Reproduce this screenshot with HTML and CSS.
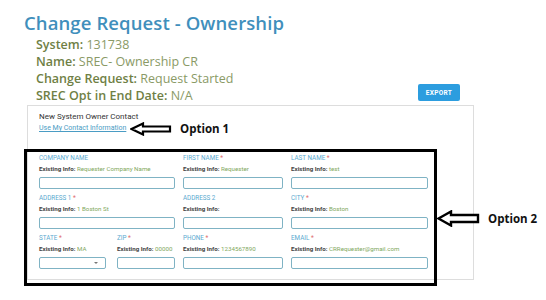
FILE: index.html
```html
<!DOCTYPE html>
<html lang="en">
<head>
    <meta charset="UTF-8">
    <meta name="viewport" content="width=device-width, initial-scale=1.0">
    <title>Change Request - Ownership</title>
    <link rel="stylesheet" href="styles.css">
</head>
<body>
    <div class="page">
        <h1>Change Request - Ownership</h1>
        <div class="summary">
            <div class="meta">
                <p><b>System:</b> 131738</p>
                <p><b>Name:</b> SREC- Ownership CR</p>
                <p><b>Change Request:</b> Request Started</p>
                <p><b>SREC Opt in End Date:</b> N/A</p>
            </div>
            <button class="export">EXPORT</button>
        </div>

        <div class="card">
            <div class="owner-head">
                <p>New System Owner Contact</p>
                <a href="#">Use My Contact Information</a>
            </div>

            <div class="form-grid">
                <div class="field">
                    <label>COMPANY NAME</label>
                    <p class="existing"><b>Existing Info:</b> Requester Company Name</p>
                    <input type="text">
                </div>
                <div class="field">
                    <label>FIRST NAME <span class="req">*</span></label>
                    <p class="existing"><b>Existing Info:</b> Requester</p>
                    <input type="text">
                </div>
                <div class="field">
                    <label>LAST NAME <span class="req">*</span></label>
                    <p class="existing"><b>Existing Info:</b> test</p>
                    <input type="text">
                </div>

                <div class="field">
                    <label>ADDRESS 1 <span class="req">*</span></label>
                    <p class="existing"><b>Existing Info:</b> 1 Boston St</p>
                    <input type="text">
                </div>
                <div class="field">
                    <label>ADDRESS 2</label>
                    <p class="existing"><b>Existing Info:</b></p>
                    <input type="text">
                </div>
                <div class="field">
                    <label>CITY <span class="req">*</span></label>
                    <p class="existing"><b>Existing Info:</b> Boston</p>
                    <input type="text">
                </div>

                <div class="split">
                    <div class="field">
                        <label>STATE <span class="req">*</span></label>
                        <p class="existing"><b>Existing Info:</b> MA</p>
                        <div class="select"><span class="caret"></span></div>
                    </div>
                    <div class="field">
                        <label>ZIP <span class="req">*</span></label>
                        <p class="existing"><b>Existing Info:</b> 00000</p>
                        <input type="text">
                    </div>
                </div>
                <div class="field">
                    <label>PHONE <span class="req">*</span></label>
                    <p class="existing"><b>Existing Info:</b> 1234567890</p>
                    <input type="text">
                </div>
                <div class="field">
                    <label>EMAIL <span class="req">*</span></label>
                    <p class="existing"><b>Existing Info:</b> CRRequester@gmail.com</p>
                    <input type="text">
                </div>
            </div>
        </div>
    </div>

    <!-- annotations drawn over the screenshot -->
    <div class="note-box"></div>
    <div class="note note-1">
        <svg width="42" height="14" viewBox="0 0 42 14"><polygon points="1.5,7 13,1.5 13,4.5 40,4.5 40,9.5 13,9.5 13,12.5" fill="#fff" stroke="#000" stroke-width="2.2" stroke-linejoin="miter"/></svg>
        <span>Option 1</span>
    </div>
    <div class="note note-2">
        <svg width="43" height="17" viewBox="0 0 43 17"><polygon points="1.5,8.5 14,1.5 14,5 41,5 41,12 14,12 14,15.5" fill="#fff" stroke="#000" stroke-width="2.4" stroke-linejoin="miter"/></svg>
        <span>Option 2</span>
    </div>
</body>
</html>
```

FILE: styles.css
```css
body {
    margin: 0;
    font-family: "Open Sans", Arial, sans-serif;
    background-color: #fff;
    position: relative;
    width: 546px;
    height: 300px;
    overflow: hidden;
}
.page {
    padding: 11px 0 0 24px;
}
h1 {
    margin: 0;
    font-size: 18.5px;
    font-weight: 600;
    color: #3f8fbc;
    line-height: 23px;
    letter-spacing: 0.1px;
}
.summary {
    display: flex;
    align-items: flex-end;
    width: 450px;
}
.meta {
    flex: 1;
    padding: 2px 0 0 12px;
}
.meta p {
    margin: 0;
    font-size: 12.5px;
    line-height: 17px;
    color: #8a9a66;
}
.meta b {
    color: #6f7f45;
    font-weight: 600;
}
.export {
    background-color: #2c9ddf;
    color: #fff;
    border: none;
    border-radius: 2px;
    font-family: Roboto, Arial, sans-serif;
    font-size: 6.5px;
    font-weight: 700;
    letter-spacing: 0.3px;
    width: 42px;
    height: 17px;
    padding: 0;
    margin: 0 14px 3px 0;
}
.card {
    margin: 1px 0 0 3px;
    width: 447px;
    border: 1px solid #ddd;
    box-sizing: border-box;
    padding: 5px 0 10px 11px;
    font-family: Roboto, Arial, sans-serif;
}
.owner-head p {
    margin: 0;
    font-size: 8px;
    line-height: 11px;
    color: #333;
}
.owner-head a {
    display: block;
    font-size: 7px;
    line-height: 12px;
    color: #4a9cc4;
}
.form-grid {
    margin-top: 19px;
    display: grid;
    grid-template-columns: 136px 100px 137px;
    column-gap: 8px;
    row-gap: 4px;
}
.split {
    display: grid;
    grid-template-columns: 67px 58px;
    column-gap: 11px;
}
.field label {
    display: block;
    font-size: 6.3px;
    line-height: 11px;
    color: #5aaad0;
}
.req {
    color: #e07070;
}
.existing {
    margin: 0;
    font-size: 6.2px;
    line-height: 11px;
    color: #7fa860;
    white-space: nowrap;
}
.existing b {
    color: #444;
    font-weight: 700;
}
.field input,
.select {
    display: block;
    box-sizing: border-box;
    width: 100%;
    height: 12px;
    margin: 2px 0 0;
    border: 1px solid #7fb3c4;
    border-radius: 2px;
    background: #fff;
    padding: 0;
}
.select {
    position: relative;
}
.caret {
    position: absolute;
    right: 7px;
    top: 4px;
    border-left: 2px solid transparent;
    border-right: 2px solid transparent;
    border-top: 2px solid #777;
}
.note-box {
    position: absolute;
    left: 24px;
    top: 149px;
    width: 413px;
    height: 137px;
    border: 3px solid #000;
    box-sizing: border-box;
}
.note {
    position: absolute;
    display: flex;
    align-items: center;
    gap: 8px;
    font-family: "Open Sans", Arial, sans-serif;
    font-weight: 700;
    font-size: 11.5px;
    color: #111;
}
.note svg {
    display: block;
}
.note-1 {
    left: 130px;
    top: 121px;
}
.note-2 {
    left: 437px;
    top: 210px;
}
```
